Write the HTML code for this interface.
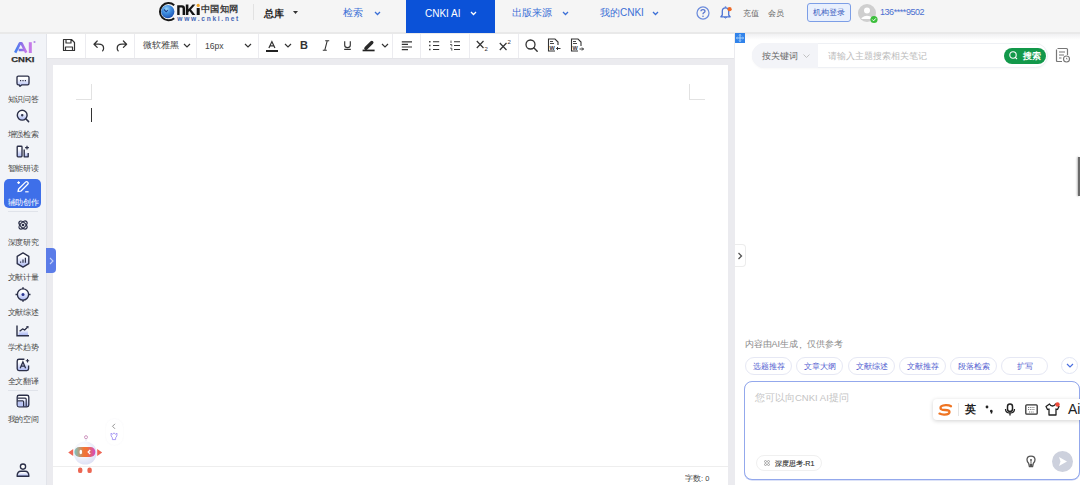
<!DOCTYPE html><html><head><meta charset="utf-8"><style>
*{box-sizing:border-box}
body{margin:0;width:1080px;height:485px;overflow:hidden;position:relative;font-family:"Liberation Sans",sans-serif;background:#fff;color:#333}
.a{position:absolute}
svg{position:absolute;overflow:visible}
#hdr{left:0;top:0;width:1080px;height:34px;background:#f5f5f5;border-bottom:2px solid #e9e9e9}
.nav{position:absolute;top:8px;font-size:10px;color:#3b6fd6;line-height:10px;white-space:nowrap}
#side{left:0;top:34px;width:47px;height:451px;background:#f2f4f8;border-right:1px solid #e2e4ea}
.lbl{position:absolute;left:0;width:46px;text-align:center;font-size:8px;line-height:8px;color:#4a4a4a;white-space:nowrap;transform:scale(0.94);transform-origin:50% 0}
#gray{left:47px;top:34px;width:688px;height:452px;background:#ebebef}
#tb{left:47px;top:34px;width:687px;height:25px;background:#fff;border-bottom:1px solid #e4e4e8}
.sep{position:absolute;top:0;width:1px;height:24px;background:#ececf0}
#page{left:53px;top:65px;width:675px;height:420px;background:#fff}
#rp{left:735px;top:34px;width:345px;height:451px;background:linear-gradient(#f0f0f2,#fff 6px)}
.chip{position:absolute;top:356.5px;height:18px;width:47px;border:1px solid #e6e8f4;border-radius:9px;background:#fff;font-size:8px;line-height:17px;text-align:center;color:#5260d0;white-space:nowrap}
</style></head><body>
<div id="hdr" class="a"></div>
<!-- logo -->
<svg style="left:158px;top:1px" width="20" height="21" viewBox="0 0 20 21">
 <defs><radialGradient id="gb" cx="0.4" cy="0.3" r="0.75"><stop offset="0" stop-color="#9ad4f8"/><stop offset="0.45" stop-color="#3f8ee0"/><stop offset="1" stop-color="#1a4fb0"/></radialGradient></defs>
 <path d="M16.2 4.2A8.6 8.6 0 1 0 16.2 17.2" fill="none" stroke="#161616" stroke-width="2"/>
 <circle cx="9.8" cy="10.6" r="6.6" fill="url(#gb)"/>
 <path d="M6 8.5L8.2 10.8L9.8 9.2" fill="none" stroke="#1a3f90" stroke-width="1.1"/>
</svg>
<svg style="left:174px;top:3px" width="28" height="13" viewBox="0 0 28 13">
 <path d="M3.2 12V2.2H8Q11 2.2 11 5.2V12H8.6V5.6Q8.6 4.4 7.5 4.4H5.6V12Z" fill="#141414"/>
 <path d="M11.8 1.6H14.4V6.2L18.6 1.6H21.4L17 6.4L21.4 12H18.4L15.5 8L14.4 9.1V12H11.8Z" fill="#141414"/>
 <circle cx="24.2" cy="2.4" r="1.6" fill="#eea224"/>
 <rect x="22.7" y="5" width="3" height="7" fill="#141414"/>
</svg>
<div class="a" style="left:201px;top:2.5px;font-size:9px;line-height:12px;color:#3c3c3c;font-weight:bold;transform:scaleX(1.03);transform-origin:0 0">中国知网</div>
<svg style="left:177px;top:15px" width="62" height="7"><text x="0.3" y="5.6" font-size="6.6" font-weight="bold" fill="#4466b4" font-family="Liberation Sans" textLength="61" lengthAdjust="spacing">www.cnki.net</text></svg>
<div class="a" style="left:253px;top:4px;width:1px;height:16px;background:#e2e2e2"></div>
<div class="a" style="left:264px;top:8px;font-size:10px;line-height:11px;font-weight:bold;color:#222">总库</div>
<svg style="left:293px;top:11px" width="6" height="4"><path d="M0 0H5L2.5 3Z" fill="#333"/></svg>
<div class="nav" style="left:343px">检索</div>
<svg style="left:374px;top:11px" width="7" height="5"><path d="M1 1L3.5 3.5L6 1" fill="none" stroke="#3b6fd6" stroke-width="1.3"/></svg>
<div class="a" style="left:406px;top:0;width:89px;height:33px;background:#0b52d8"></div>
<div class="nav" style="left:425px;top:9px;color:#fff">CNKI AI</div>
<svg style="left:470px;top:11px" width="7" height="5"><path d="M1 1L3.5 3.5L6 1" fill="none" stroke="#fff" stroke-width="1.3"/></svg>
<div class="nav" style="left:512px">出版来源</div>
<svg style="left:562px;top:11px" width="7" height="5"><path d="M1 1L3.5 3.5L6 1" fill="none" stroke="#3b6fd6" stroke-width="1.3"/></svg>
<div class="nav" style="left:600px">我的CNKI</div>
<svg style="left:652px;top:11px" width="7" height="5"><path d="M1 1L3.5 3.5L6 1" fill="none" stroke="#3b6fd6" stroke-width="1.3"/></svg>
<!-- help / bell -->
<svg style="left:696px;top:6px" width="14" height="14" viewBox="0 0 14 14"><circle cx="7" cy="7" r="6" fill="none" stroke="#6c8cdc" stroke-width="1.25"/><path d="M5 5.3Q5 3.6 7 3.6Q9 3.6 9 5.2Q9 6.3 7.6 6.8Q7 7.1 7 8.3" fill="none" stroke="#5b78d0" stroke-width="1.3"/><circle cx="7" cy="10.2" r="0.8" fill="#5b78d0"/></svg>
<svg style="left:719px;top:5px" width="14" height="14" viewBox="0 0 14 14"><path d="M6.5 2.8Q3.3 2.8 3.3 6.3V10L1.8 11.8H11.2L9.7 10V6.3Q9.7 2.8 6.5 2.8Z" fill="none" stroke="#4d74d4" stroke-width="1.3" stroke-linejoin="round"/><path d="M6.5 1.4V2.6" stroke="#4d74d4" stroke-width="1.4"/><path d="M5.3 12.4Q6.5 13.8 7.7 12.4" fill="#4d74d4" stroke="#4d74d4" stroke-width="1"/><circle cx="10.6" cy="4.2" r="2.1" fill="#ee6a28"/></svg>
<div class="a" style="left:743px;top:10px;font-size:7.5px;line-height:8px;color:#666">充值</div>
<div class="a" style="left:768px;top:10px;font-size:7.5px;line-height:8px;color:#666">会员</div>
<div class="a" style="left:807px;top:3px;width:44px;height:19px;border:1px solid #7c9ee6;border-radius:3px;background:#e9f0fd;font-size:7.5px;line-height:17px;text-align:center;color:#3a5cc0">机构登录</div>
<svg style="left:857px;top:3px" width="22" height="21" viewBox="0 0 22 21"><circle cx="10" cy="10" r="9" fill="#cfcfcf"/><circle cx="10" cy="7.5" r="3" fill="#fff"/><path d="M4.5 15Q10 10.5 15.5 15V16H4.5Z" fill="#fff"/><circle cx="17" cy="16.5" r="3.6" fill="#3cbf3c"/><path d="M15.3 16.5L16.6 17.8L18.8 15.4" fill="none" stroke="#fff" stroke-width="1"/></svg>
<div class="a" style="left:880px;top:8px;font-size:9px;line-height:9px;letter-spacing:-0.45px;color:#4a6fd0">136****9502</div>

<!-- sidebar -->
<div id="side" class="a"></div>
<div id="gray" class="a"></div>
<div id="tb" class="a"></div>
<div id="page" class="a"></div>
<div id="rp" class="a"></div>
<!-- toolbar icons -->
<div class="sep a" style="left:85px;top:34px"></div>
<div class="sep a" style="left:134px;top:34px"></div>
<div class="sep a" style="left:196px;top:34px"></div>
<div class="sep a" style="left:258px;top:34px"></div>
<div class="sep a" style="left:392px;top:34px"></div>
<div class="sep a" style="left:420px;top:34px"></div>
<div class="sep a" style="left:469px;top:34px"></div>
<div class="sep a" style="left:518px;top:34px"></div>
<svg style="left:62px;top:38px" width="14" height="14" viewBox="0 0 14 14"><path d="M1.5 1.5H9.5L12.5 4.5V12.5H1.5Z M4 1.5V5H9V1.5 M3.5 12.5V9H10.5V12.5" fill="none" stroke="#333" stroke-width="1.2" stroke-linejoin="round"/></svg>
<svg style="left:93px;top:40px" width="12" height="12" viewBox="0 0 12 12"><path d="M4.2 1L1 4.2L4.2 7.4 M1.2 4.2H5.6Q10.6 4.2 10.6 8.2Q10.6 9.8 9.6 10.9" fill="none" stroke="#333" stroke-width="1.25" stroke-linecap="round" stroke-linejoin="round"/></svg>
<svg style="left:116px;top:40px" width="12" height="12" viewBox="0 0 12 12"><path d="M7.4 1L10.6 4.2L7.4 7.4 M10.4 4.2H6Q1.2 4.2 1.2 8.2Q1.2 9.8 2.2 10.9" fill="none" stroke="#333" stroke-width="1.25" stroke-linecap="round" stroke-linejoin="round"/></svg>
<div class="a" style="left:143px;top:41px;font-size:9px;line-height:9px;color:#444">微软雅黑</div>
<svg style="left:183px;top:43px" width="8" height="5"><path d="M1 1L4 4L7 1" fill="none" stroke="#333" stroke-width="1.2"/></svg>
<div class="a" style="left:205px;top:41.5px;font-size:8.6px;line-height:9px;color:#444">16px</div>
<svg style="left:244px;top:43px" width="8" height="5"><path d="M1 1L4 4L7 1" fill="none" stroke="#333" stroke-width="1.2"/></svg>
<svg style="left:268px;top:41px" width="8" height="8" viewBox="0 0 8 8"><path d="M0.9 7L3.9 0.6L6.9 7 M2 4.9H5.8" fill="none" stroke="#333" stroke-width="1.25"/></svg>
<div class="a" style="left:266px;top:49.6px;width:12px;height:2px;background:#222"></div>
<svg style="left:284px;top:43px" width="8" height="5"><path d="M1 1L4 4L7 1" fill="none" stroke="#333" stroke-width="1.2"/></svg>
<div class="a" style="left:300px;top:40px;font-size:11px;line-height:11px;font-weight:bold;color:#333">B</div>
<svg style="left:322px;top:40px" width="8" height="11" viewBox="0 0 8 11"><path d="M3.2 0.8H7.2 M0.8 10.2H4.8 M5.2 0.8L2.8 10.2" fill="none" stroke="#333" stroke-width="1.1"/></svg>
<svg style="left:344px;top:41px" width="7" height="9" viewBox="0 0 7 9"><path d="M0.7 0.3V4.3Q0.7 6.6 3.5 6.6Q6.3 6.6 6.3 4.3V0.3 M0.2 8.3H6.8" fill="none" stroke="#333" stroke-width="1.15"/></svg>
<svg style="left:362px;top:40px" width="13" height="12" viewBox="0 0 13 12"><path d="M4 8.3L9.8 2.5" stroke="#2a2a2a" stroke-width="3.4" stroke-linecap="round"/><path d="M2.3 9.2L3.2 7.3L5 9Z" fill="#2a2a2a"/><rect x="0.6" y="9.6" width="12" height="1.7" fill="#222"/></svg>
<svg style="left:381px;top:43px" width="8" height="5"><path d="M1 1L4 4L7 1" fill="none" stroke="#333" stroke-width="1.2"/></svg>
<svg style="left:401px;top:40px" width="12" height="11" viewBox="0 0 12 11"><path d="M0.8 1.8H11 M0.8 4.4H7 M0.8 7H11 M0.8 9.6H7" stroke="#333" stroke-width="1.2"/></svg>
<svg style="left:429px;top:40px" width="12" height="11" viewBox="0 0 12 11"><path d="M0.1 1.8H1.5 M0.1 5.5H1.5 M0.1 9.5H1.5" stroke="#333" stroke-width="1.4"/><path d="M4 1.8H10.2 M4 5.5H10.2 M4 9.5H10.2" stroke="#333" stroke-width="1.1"/></svg>
<svg style="left:449px;top:40px" width="12" height="11" viewBox="0 0 12 11"><path d="M2 0.6V3 M1 4.6H2.8V6.4 M1.2 8.2H2.8V10.6" fill="none" stroke="#444" stroke-width="0.9"/><path d="M5 1.8H11 M5 5.5H11 M5 9.5H11" stroke="#333" stroke-width="1.1"/></svg>
<svg style="left:476px;top:40px" width="13" height="12" viewBox="0 0 13 12"><path d="M0.8 1L7.5 8 M7.5 1L0.8 8" stroke="#333" stroke-width="1.2"/><text x="8.5" y="11" font-size="6" fill="#333" font-family="Liberation Sans">2</text></svg>
<svg style="left:499px;top:39px" width="13" height="12" viewBox="0 0 13 12"><path d="M0.8 4L7.5 11 M7.5 4L0.8 11" stroke="#333" stroke-width="1.2"/><text x="8.5" y="5" font-size="6" fill="#333" font-family="Liberation Sans">2</text></svg>
<svg style="left:525px;top:39px" width="13" height="13" viewBox="0 0 13 13"><circle cx="5.5" cy="5.5" r="4.5" fill="none" stroke="#333" stroke-width="1.3"/><path d="M8.8 8.8L12.2 12.2" stroke="#333" stroke-width="1.4" stroke-linecap="round"/></svg>
<svg style="left:547px;top:38px" width="14" height="14" viewBox="0 0 14 14"><path d="M8 13H1.5V1H8L11 4V7" fill="none" stroke="#333" stroke-width="1.1"/><path d="M3 3.5H6 M3 5.5H7" stroke="#333" stroke-width="0.9"/><text x="2.5" y="11.5" font-size="5.5" font-weight="bold" fill="#333" font-family="Liberation Sans">W</text><path d="M13.5 10.5H9.5 M11 9L9.5 10.5L11 12" fill="none" stroke="#333" stroke-width="1"/></svg>
<svg style="left:570px;top:38px" width="14" height="14" viewBox="0 0 14 14"><path d="M8 13H1.5V1H8L11 4V8" fill="none" stroke="#333" stroke-width="1.1"/><path d="M3 3.5H6 M3 5.5H7" stroke="#333" stroke-width="0.9"/><text x="2.5" y="11.5" font-size="5.5" font-weight="bold" fill="#333" font-family="Liberation Sans">W</text><path d="M9.5 11H13.5 M12 9.5L13.5 11L12 12.5" fill="none" stroke="#333" stroke-width="1"/></svg>
<!-- move icon -->
<div class="a" style="left:735px;top:33px;width:10px;height:10px;background:#3183ea"></div>
<svg style="left:735px;top:33px" width="10" height="10" viewBox="0 0 10 10"><path d="M5 1.5V8.5 M1.5 5H8.5" stroke="#b8dcff" stroke-width="0.9"/><path d="M4 2.5L5 1.3L6 2.5 M4 7.5L5 8.7L6 7.5 M2.5 4L1.3 5L2.5 6 M7.5 4L8.7 5L7.5 6" fill="none" stroke="#b8dcff" stroke-width="0.7"/></svg>
<!-- page corner marks -->
<div class="a" style="left:91px;top:84px;width:1px;height:15px;background:#e2e2e2"></div>
<div class="a" style="left:76px;top:99px;width:16px;height:1px;background:#e2e2e2"></div>
<div class="a" style="left:689px;top:84px;width:1px;height:15px;background:#e2e2e2"></div>
<div class="a" style="left:689px;top:99px;width:16px;height:1px;background:#e2e2e2"></div>
<div class="a" style="left:91px;top:108px;width:1px;height:14px;background:#333"></div>
<!-- status -->
<div class="a" style="left:53px;top:466px;width:675px;height:1px;background:#eeeeee"></div>
<div class="a" style="left:685px;top:473.5px;font-size:7.5px;line-height:9px;color:#444">字数: 0</div>
<!-- side tabs -->
<div class="a" style="left:46px;top:248px;width:10px;height:25px;background:#5b7ce8;border-radius:0 4px 4px 0"></div>
<svg style="left:49px;top:256.5px" width="5" height="8"><path d="M1 1L4 4L1 7" fill="none" stroke="#c4d0f8" stroke-width="1.1"/></svg>
<div class="a" style="left:735px;top:244px;width:11px;height:23px;background:#fff;border:1px solid #ececec;border-left:none;border-radius:0 4px 4px 0"></div>
<svg style="left:737px;top:252px" width="6" height="8"><path d="M1.5 1L4.5 4L1.5 7" fill="none" stroke="#555" stroke-width="1.3"/></svg>
<div class="a" style="left:1078px;top:157px;width:2px;height:39px;background:#6a6a6a;box-shadow:-1px 0 2px rgba(0,0,0,.3)"></div>

<!-- right panel -->
<div class="a" style="left:752px;top:43px;width:296px;height:25px;border:1px solid #eef0f4;border-radius:13px;background:#fff;box-shadow:0 1px 2px rgba(0,0,0,.03)"></div>
<div class="a" style="left:752px;top:43px;width:66px;height:25px;border-radius:13px 0 0 13px;background:#f3f4f8"></div>
<div class="a" style="left:762px;top:52px;font-size:9px;line-height:9px;color:#666">按关键词</div>
<svg style="left:803px;top:54px" width="7" height="5"><path d="M0.5 0.5L3.5 3.5L6.5 0.5" fill="none" stroke="#bbb" stroke-width="0.9"/></svg>
<div class="a" style="left:828px;top:52px;font-size:9px;line-height:9px;color:#bbb">请输入主题搜索相关笔记</div>
<div class="a" style="left:1004px;top:47.5px;width:42px;height:16px;border-radius:8px;background:#12984a"></div>
<svg style="left:1009px;top:51px" width="9" height="9" viewBox="0 0 9 9"><circle cx="4" cy="4" r="3.2" fill="none" stroke="#fff" stroke-width="1.1"/><path d="M6.3 6.3L8 8" stroke="#fff" stroke-width="1.1"/></svg>
<div class="a" style="left:1023px;top:51.5px;font-size:9px;line-height:9px;color:#fff;font-weight:bold">搜索</div>
<svg style="left:1055px;top:47px" width="16" height="16" viewBox="0 0 16 16"><path d="M2.5 1.5H11.5Q12.5 1.5 12.5 2.5V8 M7 14.5H2.5Q1.5 14.5 1.5 13.5V2.5" fill="none" stroke="#777" stroke-width="1.2"/><path d="M4 5H10 M4 8H9 M4 11H6.5" stroke="#777" stroke-width="1.2"/><circle cx="11.5" cy="12" r="3" fill="#fff" stroke="#777" stroke-width="1.1"/><path d="M11.5 10.8V12H12.5" fill="none" stroke="#777" stroke-width="0.8"/></svg>
<div class="a" style="left:744.5px;top:339px;font-size:9px;line-height:10px;color:#8a8a8a;white-space:nowrap">内容由AI生成<span style="display:inline-block;width:9px;position:relative;left:-2.5px;top:1px">，</span>仅供参考</div>
<div class="chip" style="left:745px">选题推荐</div>
<div class="chip" style="left:796px">文章大纲</div>
<div class="chip" style="left:848px">文献综述</div>
<div class="chip" style="left:899px">文献推荐</div>
<div class="chip" style="left:950px">段落检索</div>
<div class="chip" style="left:1001px">扩写</div>
<div class="a" style="left:1061px;top:357px;width:17px;height:17px;border:1px solid #e2e6f4;border-radius:50%;background:#fff"></div>
<svg style="left:1066px;top:363px" width="8" height="5"><path d="M1 1L4 4L7 1" fill="none" stroke="#4a6fe0" stroke-width="1.2"/></svg>
<div class="a" style="left:744px;top:381px;width:336px;height:99px;border:1px solid #93a8ec;border-radius:8px;background:#fff;box-shadow:0 0.5px 0 #b9c6f2"></div>
<div class="a" style="left:755px;top:392px;font-size:9.5px;line-height:11px;color:#c4c4c4">您可以向CNKI AI提问</div>
<div class="a" style="left:756px;top:455px;width:66px;height:16px;border:1px solid #f0f0f0;border-radius:8px;background:#fff"></div>
<svg style="left:764px;top:460px" width="6" height="6" viewBox="0 0 6 6"><circle cx="1.5" cy="1.5" r="1" fill="none" stroke="#888" stroke-width="0.7"/><circle cx="4.5" cy="1.5" r="1" fill="none" stroke="#888" stroke-width="0.7"/><circle cx="1.5" cy="4.5" r="1" fill="none" stroke="#888" stroke-width="0.7"/><circle cx="4.5" cy="4.5" r="1" fill="none" stroke="#888" stroke-width="0.7"/></svg>
<div class="a" style="left:775px;top:460px;font-size:7.1px;line-height:9px;color:#333;-webkit-text-stroke:0.15px #333">深度思考-R1</div>
<svg style="left:1026px;top:455px" width="10" height="13" viewBox="0 0 10 13"><path d="M2.6 8.2Q1 6.8 1 4.8Q1 1.2 5 1.2Q9 1.2 9 4.8Q9 6.8 7.4 8.2L6.6 11.6H3.4Z" fill="#fff" stroke="#555" stroke-width="1.3" stroke-linejoin="round"/><path d="M3.6 9H6.4L6 11.4H4Z" fill="#555"/><circle cx="5" cy="5" r="1" fill="#555"/><path d="M5 6V9" stroke="#555" stroke-width="0.9"/></svg>
<div class="a" style="left:1052px;top:451px;width:21px;height:21px;border-radius:50%;background:#cdd1dd"></div>
<svg style="left:1058px;top:456px" width="10" height="11"><path d="M1 1L9 5.5L1 10L2.5 5.5Z" fill="#fff"/></svg>
<!-- IME bar -->
<div class="a" style="left:933px;top:399px;width:150px;height:21px;background:#fff;border-radius:4px;box-shadow:0 1px 4px rgba(0,0,0,.18)"></div>
<svg style="left:938px;top:404px" width="15" height="12" viewBox="0 0 15 12"><path d="M13 2.2Q11 1 7.5 1.2Q2.5 1.5 2.5 4Q2.5 6 7 6Q11.5 6 11.5 8Q11.5 10.5 6.5 10.6Q3.5 10.7 1.5 9.6" fill="none" stroke="#ef7422" stroke-width="2.3" stroke-linecap="round"/></svg>
<div class="a" style="left:958px;top:403px;width:1px;height:13px;background:#e4e4e4"></div>
<div class="a" style="left:965px;top:404px;font-size:11px;line-height:11px;color:#222;font-weight:bold">英</div>
<svg style="left:985px;top:404px" width="9" height="11"><circle cx="2" cy="3" r="1.4" fill="#222"/><path d="M6 6.5Q7.2 7.5 6.3 9.5" stroke="#222" stroke-width="1.6" fill="none"/><circle cx="6.3" cy="7" r="1.3" fill="#222"/></svg>
<svg style="left:1004px;top:403px" width="12" height="13" viewBox="0 0 12 13"><rect x="3.5" y="1" width="5" height="7.5" rx="2.5" fill="none" stroke="#222" stroke-width="1.5"/><path d="M1.5 6Q1.5 10 6 10Q10.5 10 10.5 6 M6 10V12.5" fill="none" stroke="#222" stroke-width="1.3"/></svg>
<svg style="left:1025px;top:404px" width="13" height="11" viewBox="0 0 13 11"><rect x="0.8" y="0.8" width="11.4" height="9.4" rx="1" fill="none" stroke="#333" stroke-width="1.3"/><path d="M3 3.5H10 M3 5.5H10 M4 8H9" stroke="#555" stroke-width="0.8" stroke-dasharray="1 0.8"/></svg>
<svg style="left:1045px;top:402px" width="15" height="14" viewBox="0 0 15 14"><path d="M4.5 2L1 4.5L2.5 7.5L4 7V13H11V7L12.5 7.5L14 4.5L10.5 2Q9.5 4 7.5 4Q5.5 4 4.5 2Z" fill="none" stroke="#222" stroke-width="1.3" stroke-linejoin="round"/><circle cx="12.5" cy="2.5" r="2.2" fill="#f04a3a"/></svg>
<div class="a" style="left:1068px;top:402px;font-size:14px;line-height:14px;color:#222">Ai</div>

<!-- sidebar content -->
<svg style="left:8px;top:38px" width="32" height="26" viewBox="0 0 32 26"><defs><linearGradient id="g1" x1="0" x2="1" y1="0" y2="0"><stop offset="0.1" stop-color="#4a80f0"/><stop offset="0.55" stop-color="#8a70e8"/><stop offset="1" stop-color="#c778e8"/></linearGradient></defs><path d="M7.2 14.6L11.9 5.3H13.6L18.3 14.6 M10.7 12H16.6" fill="none" stroke="url(#g1)" stroke-width="2.6" stroke-linejoin="round"/><rect x="20.8" y="4.2" width="3" height="10.8" fill="#c57ae8"/><circle cx="26.5" cy="4" r="1.1" fill="#b48ae6"/><text x="3.2" y="23.6" font-size="7.4" font-weight="bold" fill="#2e2e2e" stroke="#2e2e2e" stroke-width="0.25" font-family="Liberation Sans" textLength="23.2" lengthAdjust="spacingAndGlyphs">CNKI</text></svg>
<svg style="left:0;top:0" width="0" height="0"><defs><linearGradient id="lv" x1="0" x2="0" y1="0" y2="1"><stop offset="0.25" stop-color="#fff"/><stop offset="1" stop-color="#a9b6f2"/></linearGradient></defs></svg>
<svg style="left:16px;top:75px" width="14" height="13" viewBox="0 0 14 13"><path d="M2.4 1.1H11.6Q13 1.1 13 2.5V8.3Q13 9.9 11.6 9.9H5.6L4 11.3L3.2 9.9H2.4Q1 9.9 1 8.3V2.5Q1 1.1 2.4 1.1Z" fill="url(#lv)" stroke="#2b2f48" stroke-width="1.35" stroke-linejoin="round"/><path d="M4 5.6H5.2 M6.4 5.6H7.6 M8.8 5.6H10" stroke="#2b2f48" stroke-width="1.3"/></svg>
<div class="lbl" style="top:96px">知识问答</div>
<svg style="left:16px;top:109px" width="14" height="14" viewBox="0 0 14 14"><circle cx="6.2" cy="6.2" r="4.9" fill="url(#lv)" stroke="#2b2f48" stroke-width="1.4"/><path d="M6.2 5V7.4 M5 6.2H7.4" stroke="#2b2f48" stroke-width="1.2"/><path d="M9.8 9.8L12.6 12.6" stroke="#2b2f48" stroke-width="1.5" stroke-linecap="round"/></svg>
<div class="lbl" style="top:130.5px">增强检索</div>
<svg style="left:16px;top:145px" width="14" height="13" viewBox="0 0 14 13"><rect x="1.2" y="1.2" width="4.8" height="10.6" rx="0.8" fill="url(#lv)" stroke="#2b2f48" stroke-width="1.35"/><path d="M8.2 4.5V11.8H12.2V8" fill="url(#lv)" stroke="#2b2f48" stroke-width="1.35" stroke-linejoin="round"/><path d="M11 0.8V4.6 M9.1 2.7H12.9" stroke="#2b2f48" stroke-width="1.2"/></svg>
<div class="lbl" style="top:165px">智能研读</div>
<div class="a" style="left:4px;top:178.5px;width:37px;height:29px;border-radius:5px;background:#3e6fe9"></div>
<svg style="left:16px;top:180px" width="14" height="13" viewBox="0 0 14 13"><path d="M2 11.5L2.6 9L9.5 2.1Q10.6 1 11.7 2.1Q12.8 3.2 11.7 4.3L4.8 11.2Z" fill="none" stroke="#fff" stroke-width="1.25" stroke-linejoin="round"/><path d="M2.6 1.2V4 M1.2 2.6H4" stroke="#fff" stroke-width="1.1"/><path d="M9.2 11.8H12.6" stroke="#fff" stroke-width="1.2"/></svg>
<div class="lbl" style="top:199px;color:#fff">辅助创作</div>
<div class="a" style="left:8px;top:211px;width:30px;height:1px;background:#e0e3ea"></div>
<svg style="left:17px;top:219px" width="12" height="12" viewBox="0 0 12 12"><g fill="none" stroke="#2b2f48" stroke-width="1.2"><ellipse cx="6" cy="6" rx="5" ry="2.6" transform="rotate(45 6 6)"/><ellipse cx="6" cy="6" rx="5" ry="2.6" transform="rotate(-45 6 6)"/></g><circle cx="6" cy="6" r="1.3" fill="#2b2f48"/></svg>
<div class="lbl" style="top:239px">深度研究</div>
<svg style="left:16px;top:252px" width="14" height="16" viewBox="0 0 14 16"><path d="M7 0.9L12.8 4.3V11.7L7 15.1L1.2 11.7V4.3Z" fill="url(#lv)" stroke="#2b2f48" stroke-width="1.35" stroke-linejoin="round"/><path d="M4.6 10.8V9.6 M7 10.8V7.4 M9.4 10.8V5.8" stroke="#2b2f48" stroke-width="1.2"/></svg>
<div class="lbl" style="top:274px">文献计量</div>
<svg style="left:15px;top:287px" width="16" height="15" viewBox="0 0 16 15"><circle cx="8" cy="7.5" r="5.6" fill="url(#lv)" stroke="#2b2f48" stroke-width="1.35"/><circle cx="8" cy="7.5" r="1.5" fill="#2a3590"/><path d="M8 0.3V2 M8 13V14.7 M0.5 7.5H2.4 M13.6 7.5H15.5" stroke="#2b2f48" stroke-width="1.5"/></svg>
<div class="lbl" style="top:308.5px">文献综述</div>
<svg style="left:16px;top:325px" width="14" height="12" viewBox="0 0 14 12"><path d="M2.5 10V7.2L5.5 4.8L8 6L12 2.5V10Z" fill="url(#lv)"/><path d="M1 0.5V10.8H13" fill="none" stroke="#2b2f48" stroke-width="1.4"/><path d="M3.6 6.3L6.6 3.9L8.6 5L11.5 2.2" fill="none" stroke="#2b2f48" stroke-width="1.3" stroke-linejoin="round"/><path d="M12.6 0.9L12.4 3.6L9.9 1.2Z" fill="#2b2f48"/></svg>
<div class="lbl" style="top:343.5px">学术趋势</div>
<svg style="left:16px;top:358px" width="14" height="14" viewBox="0 0 14 14"><path d="M8.4 1.2H3Q1.2 1.2 1.2 3V10.8Q1.2 12.6 3 12.6H10.8Q12.6 12.6 12.6 10.8V7.5" fill="url(#lv)" stroke="#2b2f48" stroke-width="1.35"/><path d="M4.2 10.3L6.9 4L9.6 10.3 M5.2 8.2H8.6" fill="none" stroke="#2b2f48" stroke-width="1.3"/><path d="M11.5 1V4.4 M9.8 2.7H13.2" stroke="#2b2f48" stroke-width="1.1"/></svg>
<div class="lbl" style="top:378px">全文翻译</div>
<div class="a" style="left:8px;top:390px;width:30px;height:1px;background:#e0e3ea"></div>
<svg style="left:16px;top:394px" width="14" height="14" viewBox="0 0 14 14"><rect x="1.2" y="1.2" width="11.6" height="11.6" rx="1.8" fill="url(#lv)" stroke="#2b2f48" stroke-width="1.35"/><path d="M1.8 4.2H9.2Q10.2 4.2 10.2 5.2V12.4 M1.8 6.8H6.6Q7.6 6.8 7.6 7.8V12.4" fill="none" stroke="#2b2f48" stroke-width="1.2"/><rect x="1.8" y="8" width="4.8" height="4.2" fill="#b9c4f4"/></svg>
<div class="lbl" style="top:416px">我的空间</div>
<svg style="left:16px;top:463px" width="14" height="14" viewBox="0 0 14 14"><circle cx="7" cy="3.6" r="2.6" fill="#fff" stroke="#2b2f48" stroke-width="1.35"/><path d="M1.1 13.2Q1.1 8.2 5 8.2H9Q12.9 8.2 12.9 13.2Z" fill="url(#lv)" stroke="#2b2f48" stroke-width="1.35" stroke-linejoin="round"/></svg>
<!-- robot -->
<div class="a" style="left:106px;top:419px;width:17px;height:26px;border-radius:9px;background:#fff;box-shadow:0 0 2px rgba(120,120,160,.07)"></div>
<svg style="left:62px;top:430px" width="44" height="48" viewBox="0 0 44 48"><defs><linearGradient id="vz" x1="0" x2="1"><stop offset="0" stop-color="#78c4c4"/><stop offset="0.45" stop-color="#f27434"/><stop offset="0.6" stop-color="#f07038"/><stop offset="1" stop-color="#d04cc8"/></linearGradient><radialGradient id="bd" cx="0.4" cy="0.35" r="0.7"><stop offset="0.3" stop-color="#fbfbff"/><stop offset="1" stop-color="#dcdff4"/></radialGradient></defs>
<circle cx="24" cy="7.2" r="1.5" fill="none" stroke="#c88ab8" stroke-width="0.9"/><path d="M24 8.7V11" stroke="#d8d8ee" stroke-width="0.8"/>
<circle cx="23.2" cy="23" r="11.5" fill="url(#bd)"/>
<path d="M6.2 22.5L11.2 19V26Z M40.2 22.5L35.2 19V26Z" fill="#ee6656"/>
<rect x="12.4" y="17" width="21" height="10" rx="5" fill="url(#vz)"/>
<ellipse cx="18.8" cy="22" rx="1.3" ry="2.3" fill="#fff"/><path d="M28.2 20L26.2 22L28.2 24" fill="none" stroke="#fff" stroke-width="1.3"/>
<rect x="16" y="37.5" width="4.4" height="5.6" rx="2.2" fill="#ec6652"/><rect x="25.4" y="37.5" width="4.4" height="5.6" rx="2.2" fill="#ec6652"/></svg>
<svg style="left:111px;top:423px" width="6" height="7"><path d="M4 0.8L1.5 3.3L4 5.8" fill="none" stroke="#888" stroke-width="0.9"/></svg>
<svg style="left:110px;top:432px" width="8" height="9" viewBox="0 0 8 9"><path d="M1 1.2L2.6 2.3L4 0.8L5.4 2.3L7 1.2Q7.4 4.5 5.6 5.8V7.6H2.4V5.8Q0.6 4.5 1 1.2Z" fill="none" stroke="#a292f2" stroke-width="0.9" stroke-linejoin="round"/></svg>

</body></html>
